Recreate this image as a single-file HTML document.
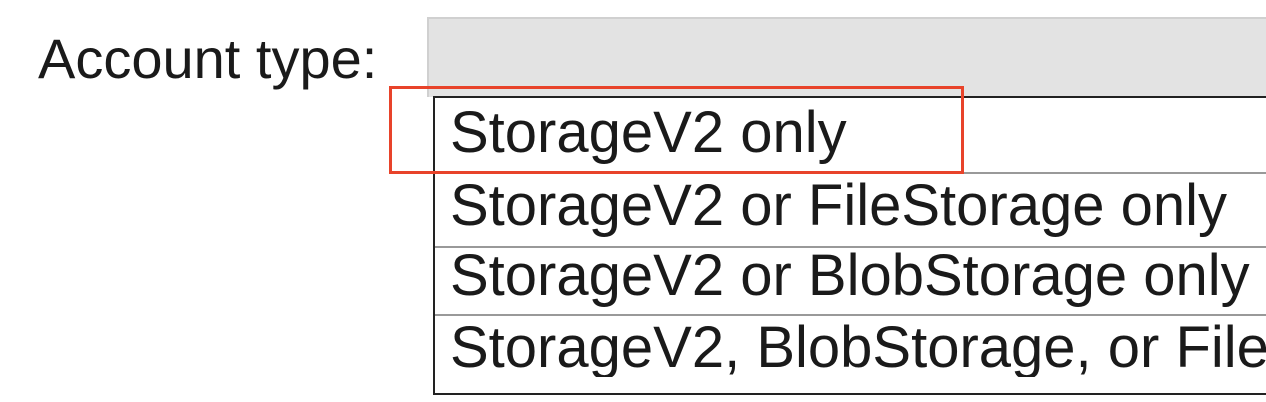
<!DOCTYPE html>
<html><head><style>
html,body{margin:0;width:1266px;height:402px;overflow:hidden}
body{background:#fff;position:relative;font-family:"Liberation Sans",Arial,sans-serif;color:#1a1a1a}
.t{position:absolute;white-space:nowrap;line-height:1}
#clip{position:absolute;left:0;top:0;width:1266px;height:402px;overflow:hidden}
</style></head><body>
<div id="clip">
<div class="t" style="left:38px;top:31px;font-size:56px">Account type:</div>
<div style="position:absolute;left:427px;top:17px;width:839px;height:80px;background:#e3e3e3;border-top:2px solid #d0d0d0;border-left:2px solid #d0d0d0;box-sizing:border-box"></div>
<div style="position:absolute;left:433px;top:96px;width:833px;height:299px;border:2px solid #222;border-right:none;background:#fff;box-sizing:border-box"></div>
<div style="position:absolute;left:435px;top:172px;width:831px;height:2px;background:#999"></div>
<div style="position:absolute;left:435px;top:246px;width:831px;height:2px;background:#999"></div>
<div style="position:absolute;left:435px;top:314px;width:831px;height:2px;background:#999"></div>
<div style="position:absolute;left:0;top:0;width:1266px;height:402px;overflow:hidden">
<div class="t" style="left:450px;top:104px;font-size:58px">StorageV2 only</div>
<div class="t" style="left:450px;top:177px;font-size:58px">StorageV2 or FileStorage only</div>
<div class="t" style="left:450px;top:247px;font-size:58px">StorageV2 or BlobStorage only</div>
<div class="t" style="left:450px;top:319px;font-size:58px;width:816px;overflow:hidden">StorageV2, BlobStorage, or FileStorage</div>
</div>
<div style="position:absolute;left:389px;top:86px;width:575px;height:88px;border:3px solid #e8432a;box-sizing:border-box"></div>
</div>
</body></html>
